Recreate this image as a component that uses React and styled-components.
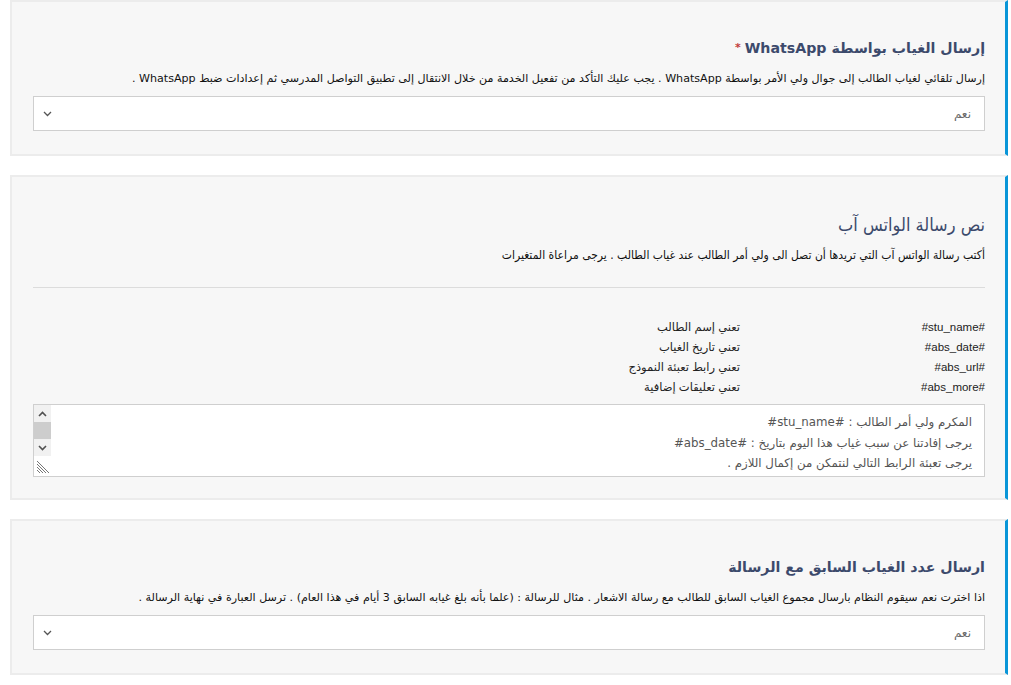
import styled, { createGlobalStyle } from 'styled-components';

const GlobalStyle = createGlobalStyle`
    body {
        margin: 0;
        background: #fff;
        font-family: "DejaVu Sans", "Noto Sans", sans-serif;
    }
`;

const Page = styled.div`
    direction: rtl;
    padding: 0 3px 0 10px;
    display: flex;
    flex-direction: column;
    gap: 19px;
`;

const Card = styled.section`
    background: #f7f7f7;
    border: 2px solid #ececec;
    border-right: 3px solid #0a96d8;
    padding: ${(p) => p.$pad || '35px 20px 23px 21px'};
`;

const Title = styled.h3`
    margin: 0;
    font-size: ${(p) => (p.$thin ? '18px' : '14.2px')};
    font-weight: ${(p) => (p.$thin ? 'normal' : 'bold')};
    font-family: ${(p) => (p.$thin ? '"DejaVu Sans Condensed", "DejaVu Sans", sans-serif' : 'inherit')};
    color: #3c4a6c;
    line-height: 22px;
`;

const Star = styled.span`
    color: #c23b3b;
    font-size: 11px;
    margin-right: 4px;
    vertical-align: top;
`;

const Desc = styled.p`
    margin: ${(p) => p.$m || '11px 0 8px'};
    font-size: ${(p) => (p.$thin ? '12px' : '11.1px')};
    color: #111;
    line-height: 18px;
    font-family: ${(p) => (p.$thin ? '"DejaVu Sans Condensed", "DejaVu Sans", sans-serif' : 'inherit')};
`;

const SelectBox = styled.div`
    height: 35px;
    background: #fff;
    border: 1px solid #cfcfcf;
    box-sizing: border-box;
    display: flex;
    align-items: center;
    justify-content: space-between;
    padding: 0 13px 0 9px;
    font-size: 12px;
    color: #6a6a6a;
`;

const Chevron = styled.svg`
    width: 9px;
    height: 6px;
`;

const Rule = styled.hr`
    margin: 23px 0 0;
    border: 0;
    border-top: 1px solid #dcdcdc;
`;

const VarTable = styled.div`
    margin-top: 29px;
    display: grid;
    grid-template-columns: 245px 1fr;
    grid-auto-rows: 20px;
    font-family: "Liberation Sans", "DejaVu Sans", sans-serif;
    font-size: 11.5px;
    color: #222;
    align-items: center;
`;

const VarCell = styled.div`
    white-space: nowrap;
`;

const AreaBox = styled.div`
    margin-top: 7px;
    height: 73px;
    box-sizing: border-box;
    border: 1px solid #cfcfcf;
    background: #fff;
    display: flex;
`;

const MessageArea = styled.textarea`
    flex: 1;
    border: 0;
    background: transparent;
    direction: rtl;
    font-family: "DejaVu Sans", sans-serif;
    font-size: 11.8px;
    line-height: 20.5px;
    color: #555;
    padding: 7px 12px 0;
    resize: none;
    outline: none;
    overflow: hidden;
`;

const ScrollBar = styled.div`
    width: 17px;
    display: flex;
    flex-direction: column;
`;

const ScrollButton = styled.div`
    height: 17px;
    background: #f1f1f1;
    display: flex;
    align-items: center;
    justify-content: center;
`;

const ScrollThumb = styled.div`
    height: 17px;
    background: #cdcdcd;
`;

const Resizer = styled.svg`
    margin-top: auto;
    margin-bottom: 2px;
    width: 15px;
    height: 15px;
    display: block;
`;

function Select({ value }) {
    return (
        <SelectBox>
            <span>{value}</span>
            <Chevron viewBox="0 0 9 6">
                <path d="M1 1l3.5 3.5L8 1" fill="none" stroke="#555" strokeWidth="1.3" />
            </Chevron>
        </SelectBox>
    );
}

const vars = [
    ['#stu_name#', 'تعني إسم الطالب'],
    ['#abs_date#', 'تعني تاريخ الغياب'],
    ['#abs_url#', 'تعني رابط تعبئة النموذج'],
    ['#abs_more#', 'تعني تعليقات إضافية'],
];

const message = [
    'المكرم ولي أمر الطالب : #stu_name#',
    'يرجى إفادتنا عن سبب غياب هذا اليوم بتاريخ : #abs_date#',
    'يرجى تعبئة الرابط التالي لنتمكن من إكمال اللازم .',
    '#abs_url#',
].join('\n');

export default function App() {
    return (
        <Page>
            <GlobalStyle />
            <Card>
                <Title>
                    إرسال الغياب بواسطة WhatsApp<Star>*</Star>
                </Title>
                <Desc>
                    إرسال تلقائي لغياب الطالب إلى جوال ولي الأمر بواسطة WhatsApp . يجب عليك التأكد من تفعيل الخدمة من خلال الانتقال إلى تطبيق التواصل المدرسي ثم إعدادات ضبط WhatsApp .
                </Desc>
                <Select value="نعم" />
            </Card>
            <Card $pad="37px 20px 21px 21px">
                <Title $thin>نص رسالة الواتس آب</Title>
                <Desc $thin $m="10px 0 0">
                    أكتب رسالة الواتس آب التي تريدها أن تصل الى ولي أمر الطالب عند غياب الطالب . يرجى مراعاة المتغيرات
                </Desc>
                <Rule />
                <VarTable>
                    {vars.map(([k, v]) => [
                        <VarCell key={k}>{k}</VarCell>,
                        <VarCell key={k + 'v'}>{v}</VarCell>,
                    ])}
                </VarTable>
                <AreaBox>
                    <MessageArea defaultValue={message} />
                    <ScrollBar>
                        <ScrollButton>
                            <Chevron viewBox="0 0 9 6">
                                <path d="M1 5l3.5-3.5L8 5" fill="none" stroke="#505050" strokeWidth="1.6" />
                            </Chevron>
                        </ScrollButton>
                        <ScrollThumb />
                        <ScrollButton>
                            <Chevron viewBox="0 0 9 6">
                                <path d="M1 1l3.5 3.5L8 1" fill="none" stroke="#505050" strokeWidth="1.6" />
                            </Chevron>
                        </ScrollButton>
                        <Resizer viewBox="0 0 15 15">
                            <g stroke="#777" strokeWidth="1">
                                <path d="M1 2l12 12" />
                                <path d="M1 5l9 9" />
                                <path d="M1 8l6 6" />
                                <path d="M1 11l3 3" />
                            </g>
                        </Resizer>
                    </ScrollBar>
                </AreaBox>
            </Card>
            <Card>
                <Title>ارسال عدد الغياب السابق مع الرسالة</Title>
                <Desc>
                    اذا اخترت نعم سيقوم النظام بارسال مجموع الغياب السابق للطالب مع رسالة الاشعار . مثال للرسالة : (علما بأنه بلغ غيابه السابق 3 أيام في هذا العام) . ترسل العبارة في نهاية الرسالة .
                </Desc>
                <Select value="نعم" />
            </Card>
        </Page>
    );
}
